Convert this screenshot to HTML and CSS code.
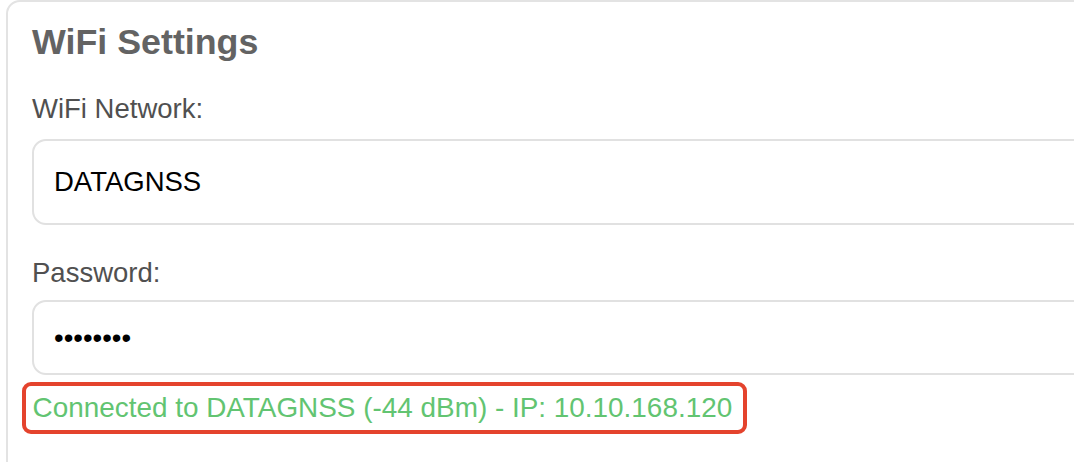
FILE: index.html
```html
<!DOCTYPE html>
<html lang="en">
<head>
<meta charset="utf-8">
<title>WiFi Settings</title>
<link rel="stylesheet" href="styles.css">
</head>
<body>
  <section class="card">
    <h2 class="card-title">WiFi Settings</h2>
    <label class="field-label field-label--first" for="ssid">WiFi Network:</label>
    <input class="field-input field-input--ssid" id="ssid" type="text" value="DATAGNSS">
    <label class="field-label field-label--second" for="pass">Password:</label>
    <input class="field-input field-input--pass" id="pass" type="password" value="12345678">
    <div class="status">Connected to DATAGNSS (-44 dBm) - IP: 10.10.168.120</div>
  </section>
</body>
</html>
```

FILE: styles.css
```css
html, body {
  margin: 0;
  padding: 0;
  background: #ffffff;
  overflow: hidden;
}

body {
  width: 1074px;
  height: 462px;
  font-family: "Liberation Sans", Arial, sans-serif;
}

.card {
  box-sizing: border-box;
  margin-left: 6px;
  width: 1200px;
  min-height: 520px;
  border: 2px solid #e3e3e3;
  border-radius: 14px;
  padding: 20px 0 0 24px;
  display: flex;
  flex-direction: column;
  align-items: flex-start;
}

.card-title {
  margin: 0 0 31px 0;
  font-size: 35.8px;
  line-height: 40px;
  font-weight: 700;
  color: #636363;
}

.field-label {
  display: block;
  font-size: 27.5px;
  line-height: 32px;
  color: #505050;
}

.field-label--second {
  margin-top: 32px;
}

.field-input {
  box-sizing: border-box;
  display: block;
  width: 1100px;
  border: 2px solid #e1e1e1;
  border-radius: 14px;
  padding: 0 20px;
  font-family: "Liberation Sans", Arial, sans-serif;
  font-size: 27.5px;
  color: #000000;
  background: #ffffff;
  outline: none;
}

.field-input--ssid {
  margin-top: 14px;
  height: 86px;
}

.field-input--pass {
  margin-top: 11px;
  height: 75px;
}

.status {
  margin-top: 7px;
  margin-left: -10px;
  border: 4.5px solid #e4432d;
  border-radius: 9px;
  padding: 5.5px 11px 6.5px 6.5px;
  font-size: 27.9px;
  line-height: 32px;
  color: #62c471;
  white-space: nowrap;
}
```
